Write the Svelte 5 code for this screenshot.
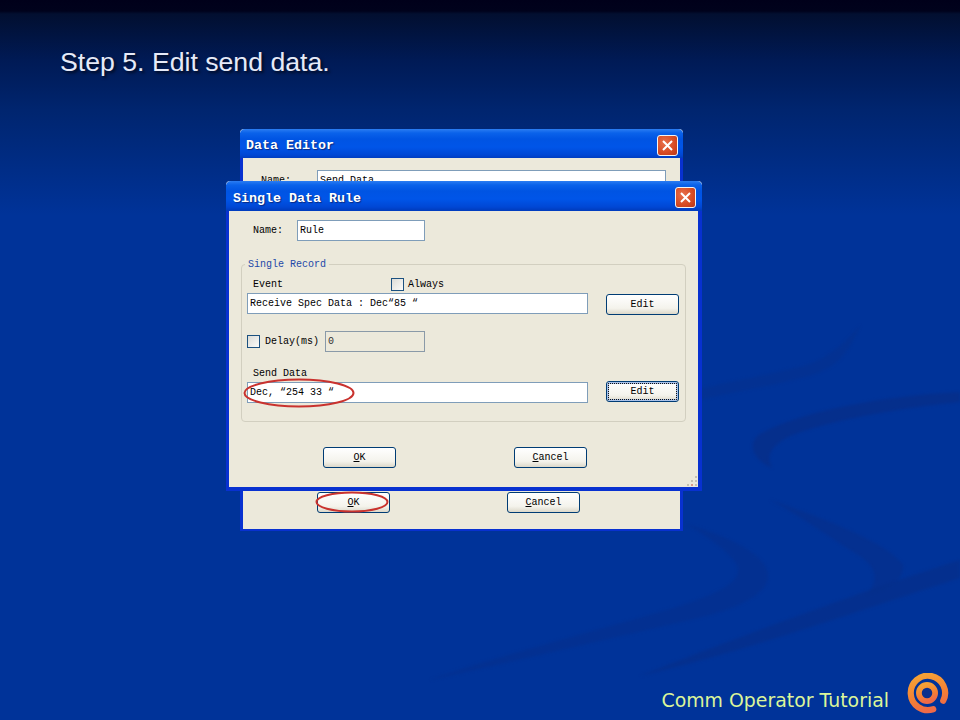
<script>
  const closeIcon = "M5 5 L14 14 M14 5 L5 14";
</script>

<main class="slide">
  <svg class="swooshes" viewBox="0 0 960 720" aria-hidden="true">
    <path d="M960 392 C880 396 800 412 760 434 C748 442 750 458 772 468 C766 456 770 446 790 436 C830 420 900 408 960 402 Z" />
    <path d="M860 325 C850 350 840 365 815 374 C780 385 730 392 690 402 L690 392 C730 380 790 372 815 362 C835 352 848 340 860 325 Z" opacity="0.5" />
    <path d="M770 500 C830 520 890 545 903 565 C905 580 885 592 864 597 C878 584 880 570 860 556 C830 538 800 515 770 500 Z" opacity="0.7" />
    <path d="M686 524 C740 540 768 558 768 576 C768 595 735 610 690 620 C620 636 520 660 430 680 C500 655 600 630 680 606 C730 590 745 578 735 562 C725 548 705 535 686 524 Z" opacity="0.6" />
    <path d="M960 560 L960 578 C860 610 750 650 640 676 C730 640 860 592 960 560 Z" opacity="0.85" />
  </svg>

  <header class="heading">
    <h1>Step 5. Edit send data.</h1>
  </header>

  <section class="window back-window">
    <div class="titlebar">
      <span class="title">Data Editor</span>
      <button class="close" aria-label="Close">
        <svg viewBox="0 0 19 19"><path d={closeIcon} /></svg>
      </button>
    </div>
    <div class="client back-client">
      <div class="back-name">
        <span class="back-label">Name:</span>
        <input class="field back-field" value="Send Data" readonly />
      </div>
      <div class="actions back-actions">
        <button class="btn"><u>O</u>K</button>
        <button class="btn"><u>C</u>ancel</button>
      </div>
    </div>
  </section>

  <section class="window front-window">
    <div class="titlebar">
      <span class="title">Single Data Rule</span>
      <button class="close" aria-label="Close">
        <svg viewBox="0 0 19 19"><path d={closeIcon} /></svg>
      </button>
    </div>
    <div class="client front-client">
      <div class="name-row">
        <span class="name-label">Name:</span>
        <input class="field name-field" value="Rule" readonly />
      </div>

      <div class="group">
        <span class="legend">Single Record</span>

        <div class="event-row">
          <span class="event-label">Event</span>
          <span class="check"></span>
          <span>Always</span>
        </div>
        <div class="data-row">
          <input class="field wide" value="Receive Spec Data : Dec“85 “" readonly />
          <button class="btn edit-low">Edit</button>
        </div>

        <div class="delay-row">
          <span class="check"></span>
          <span class="delay-label">Delay(ms)</span>
          <input class="field delay-field" value="0" disabled />
        </div>

        <div class="send-label">Send Data</div>
        <div class="data-row">
          <input class="field wide" value="Dec, “254 33 “" readonly />
          <button class="btn edit-high focused">Edit</button>
        </div>
      </div>

      <div class="actions front-actions">
        <button class="btn"><u>O</u>K</button>
        <button class="btn"><u>C</u>ancel</button>
      </div>

      <svg class="grip" viewBox="0 0 12 12" aria-hidden="true">
        <rect x="9" y="1" width="2" height="2" />
        <rect x="5" y="5" width="2" height="2" />
        <rect x="9" y="5" width="2" height="2" />
        <rect x="1" y="9" width="2" height="2" />
        <rect x="5" y="9" width="2" height="2" fill="#d89a8c" />
        <rect x="9" y="9" width="2" height="2" />
      </svg>
    </div>
  </section>

  <svg class="marks" viewBox="0 0 960 720" aria-hidden="true">
    <ellipse cx="299" cy="393" rx="54.5" ry="13.5" />
    <ellipse cx="352" cy="502" rx="35.5" ry="9.5" />
  </svg>

  <footer class="footer">
    <span class="footer-text">Comm Operator Tutorial</span>
    <svg class="logo" viewBox="0 0 44 44" aria-hidden="true">
      <defs>
        <linearGradient id="ring" x1="0.3" y1="0" x2="0.6" y2="1">
          <stop offset="0" stop-color="#f5a136" />
          <stop offset="0.6" stop-color="#f47f35" />
          <stop offset="1" stop-color="#ee6a48" />
        </linearGradient>
      </defs>
      <path class="logo-arc" d="M38.5 29 A18 18 0 1 0 28 38" />
      <circle class="logo-ring" cx="21.5" cy="21" r="8.5" />
    </svg>
  </footer>
</main>

<style>
  :global(body) {
    margin: 0;
  }

  .slide {
    position: relative;
    width: 960px;
    height: 720px;
    overflow: hidden;
    display: flex;
    flex-direction: column;
    justify-content: space-between;
    background: linear-gradient(#00001a 0, #00021c 11px, #020f30 14px, #001a55 60px, #00256f 110px, #003399 215px);
    font-family: "Liberation Mono", monospace;
    font-size: 10px;
    color: #000;
  }

  .swooshes {
    position: absolute;
    inset: 0;
    width: 960px;
    height: 720px;
    fill: #052f8c;
    filter: blur(1.5px);
  }

  .heading {
    position: relative;
    padding: 47px 0 0 60px;
  }

  h1 {
    margin: 0;
    font: 400 26.67px/30px "Liberation Sans", sans-serif;
    color: #e6eaf8;
    text-shadow: 2px 2px 3px rgba(0, 0, 0, 0.65);
  }

  .window {
    position: absolute;
    box-sizing: border-box;
    display: flex;
    flex-direction: column;
    background: linear-gradient(#b9cde8 4px, #0831d0 4px);
    border-radius: 4px 4px 0 0;
  }

  .back-window {
    left: 240px;
    top: 129px;
    width: 443px;
    height: 402px;
    padding: 0 3px 2px;
  }

  .front-window {
    left: 226px;
    top: 181px;
    width: 476px;
    height: 310px;
    padding: 0 4px 4px 3px;
  }

  .titlebar {
    display: flex;
    align-items: center;
    justify-content: space-between;
    height: 29px;
    margin: 0 -3px 0;
    padding: 0 5px 0 6px;
    border-radius: 5px 5px 0 0;
    background: linear-gradient(#2b7df2 0, #0a62ea 4px, #0054e3 10px, #0055e8 18px, #0047d4 26px, #003dc0 29px);
  }

  .front-window .titlebar {
    height: 30px;
    margin-right: -4px;
    padding-left: 7px;
    padding-right: 6px;
  }

  .title {
    padding-top: 4px;
    font: 700 13.33px/16px "Liberation Mono", monospace;
    color: #fff;
    text-shadow: 1px 1px 1px #0a2a80;
  }

  .front-window .title {
    padding-top: 5px;
  }

  .close {
    box-sizing: border-box;
    width: 21px;
    height: 21px;
    margin-top: 3px;
    padding: 0;
    border: 1px solid #f4f4f4;
    border-radius: 3px;
    background: radial-gradient(circle at 35% 35%, #e8704c, #d64a22 60%, #b8361a);
  }

  .close svg {
    display: block;
    width: 19px;
    height: 19px;
    fill: none;
    stroke: #fff;
    stroke-width: 2;
  }

  .client {
    position: relative;
    flex: 1;
    display: flex;
    flex-direction: column;
    background: #ece9db;
  }

  .back-client {
    justify-content: space-between;
  }

  .back-name {
    display: flex;
    align-items: center;
    padding: 12px 14px 0 18px;
  }

  .back-label {
    width: 56px;
  }

  .back-field {
    flex: 1;
    height: 21px;
  }

  .field {
    box-sizing: border-box;
    min-width: 0;
    padding: 0 2px;
    border: 1px solid #7f9db9;
    border-radius: 0;
    outline: none;
    background: #fff;
    font: inherit;
    color: #000;
  }

  .field:disabled {
    border-color: #8a9aa8;
    background: #ece9db;
    color: #333;
  }

  .name-row {
    display: flex;
    align-items: center;
    padding: 9px 0 0 24px;
  }

  .name-label {
    width: 44px;
  }

  .name-field {
    width: 128px;
    height: 21px;
  }

  .group {
    position: relative;
    box-sizing: border-box;
    width: 445px;
    height: 158px;
    margin: 23px 0 0 12px;
    padding: 13px 0 0 5px;
    border: 1px solid #d2cfc0;
    border-radius: 4px;
  }

  .legend {
    position: absolute;
    left: 3px;
    top: -6px;
    padding: 0 3px;
    background: #ece9db;
    color: #1c48a8;
    line-height: 12px;
  }

  .event-row {
    display: flex;
    align-items: center;
    height: 13px;
    gap: 4px;
  }

  .event-label {
    width: 134px;
    padding-left: 6px;
  }

  .check {
    box-sizing: border-box;
    width: 13px;
    height: 13px;
    border: 1px solid #1c5180;
    background: linear-gradient(135deg, #dcdcd7, #fbfbf9);
  }

  .data-row {
    display: flex;
    align-items: flex-start;
    gap: 18px;
    margin-top: 2px;
  }

  .wide {
    width: 341px;
    height: 21px;
  }

  .btn {
    box-sizing: border-box;
    width: 73px;
    height: 21px;
    padding: 0;
    border: 1px solid #003c74;
    border-radius: 3px;
    background: linear-gradient(#ffffff, #f4f3ec 70%, #dcd8c9);
    font: inherit;
    color: #000;
  }

  .edit-low {
    margin-top: 1px;
  }

  .edit-high {
    margin-top: -1px;
  }

  .focused {
    outline: 1px dotted #111;
    outline-offset: -3px;
    box-shadow: inset 0 0 0 2px #a9c2ea;
  }

  .delay-row {
    display: flex;
    align-items: center;
    height: 21px;
    margin-top: 16px;
  }

  .delay-label {
    margin-left: 5px;
    width: 60px;
  }

  .delay-field {
    width: 100px;
    height: 21px;
  }

  .send-label {
    height: 13px;
    margin-top: 15px;
    padding-left: 6px;
    line-height: 13px;
  }

  .actions {
    display: flex;
  }

  .front-actions {
    gap: 118px;
    padding: 25px 0 0 94px;
  }

  .back-actions {
    gap: 117px;
    padding: 0 0 16px 74px;
  }

  .grip {
    position: absolute;
    right: 0;
    bottom: 0;
    width: 12px;
    height: 12px;
    fill: #c4c1b2;
  }

  .marks {
    position: absolute;
    inset: 0;
    width: 960px;
    height: 720px;
    fill: none;
    stroke: #c9322e;
    stroke-width: 2;
    pointer-events: none;
  }

  .footer {
    position: relative;
    display: flex;
    align-items: center;
    justify-content: flex-end;
    gap: 17px;
    padding: 0 11px 5px 0;
  }

  .footer-text {
    padding-top: 11px;
    font: 400 18.9px/22px "DejaVu Sans", sans-serif;
    color: #dcf59a;
  }

  .logo {
    width: 43px;
    height: 42px;
    fill: none;
  }

  .logo-arc {
    stroke: url(#ring);
    stroke-width: 6.5;
    stroke-linecap: round;
  }

  .logo-ring {
    stroke: url(#ring);
    stroke-width: 6;
    fill: #0a2f8c;
  }
</style>
